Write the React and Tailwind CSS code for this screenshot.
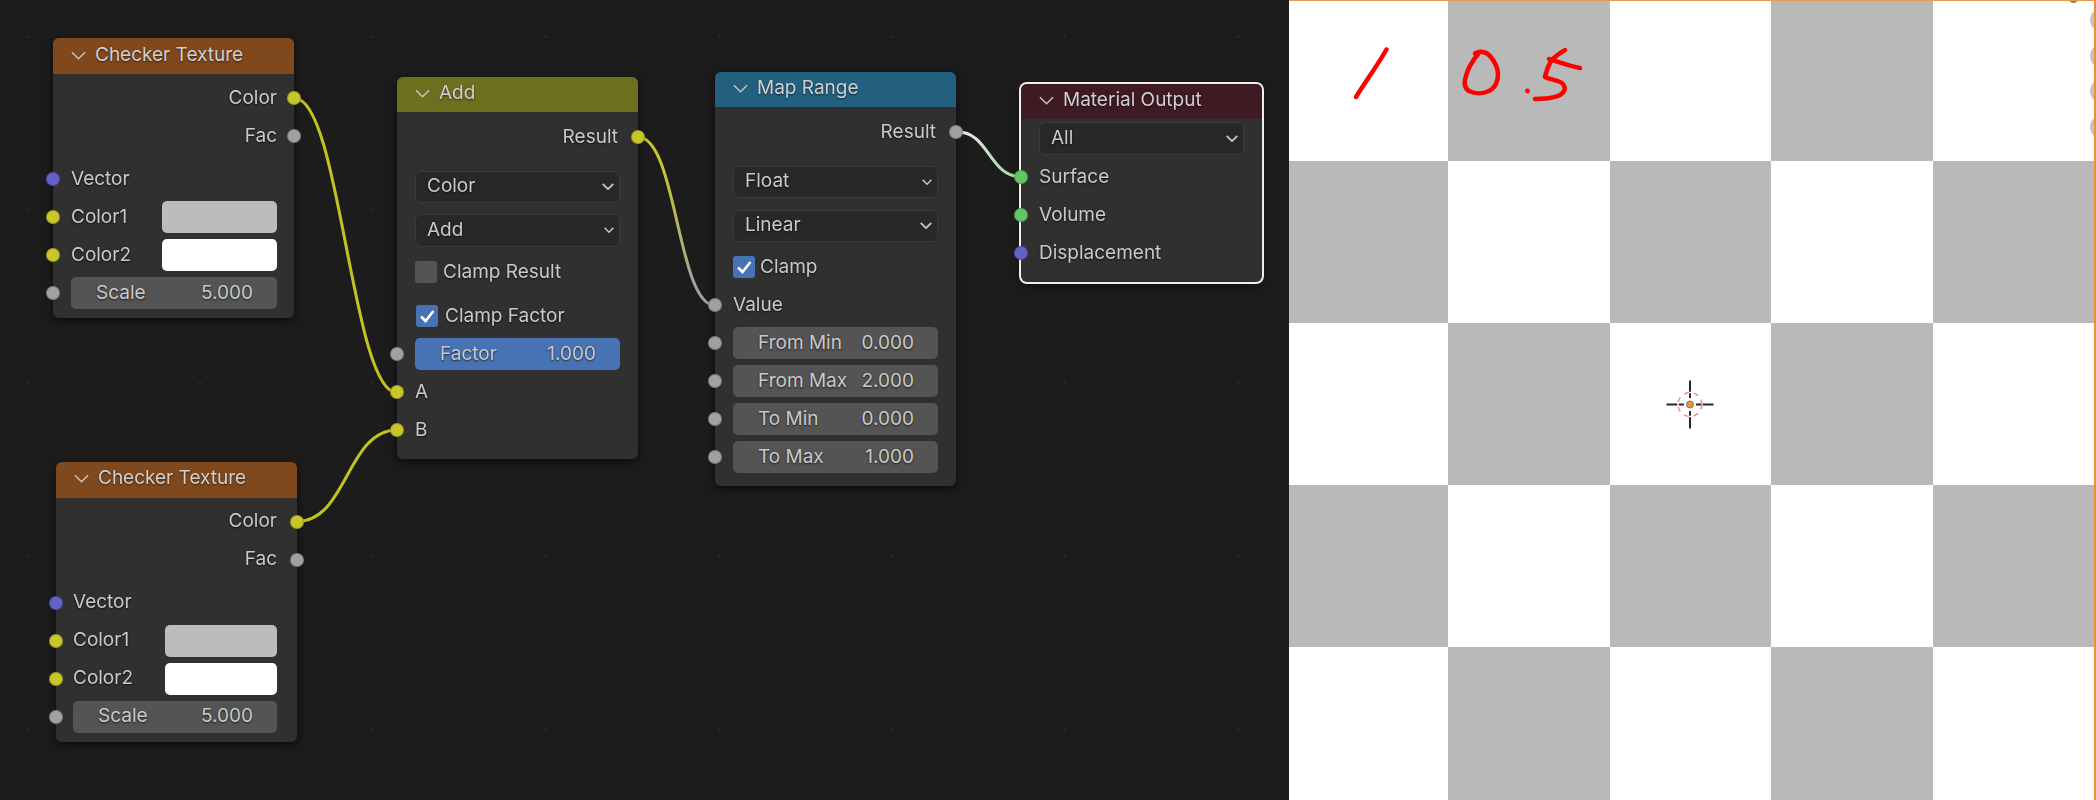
const FONT = 'font-["Inter",sans-serif]'

const SOCKET = {
  yellow: 'bg-[#c7c729]',
  gray: 'bg-[#a1a1a1]',
  purple: 'bg-[#6363c7]',
  green: 'bg-[#63c763]',
}

function Socket({ color, side = 'left' }) {
  return (
    <span
      className={`absolute top-1/2 h-[14px] w-[14px] -translate-y-1/2 rounded-full border border-black/20 ${SOCKET[color]} ${
        side === 'left' ? 'left-[-7px]' : 'right-[-7px]'
      }`}
    />
  )
}

function Chevron({ className, width = 1.6 }) {
  return (
    <svg viewBox="0 0 16 9" fill="none" className={className}>
      <path d="M1 1l7 7 7-7" stroke="currentColor" strokeWidth={width} />
    </svg>
  )
}

function Header({ title, color, height = 'h-[35px]' }) {
  return (
    <div className={`flex items-center gap-[9px] rounded-t-[6px] pb-[2px] pl-[18px] text-[#cfcfcf] ${height} ${color}`}>
      <Chevron className="h-[9px] w-[15px] text-[#c4c4c4]" />
      <span className="[text-shadow:0_1px_2px_#0009]">{title}</span>
    </div>
  )
}

function Row({ socket, side = 'left', children, className = '' }) {
  return (
    <div className={`relative flex h-[38px] items-center px-[18px] ${side === 'right' ? 'justify-end' : ''} ${className}`}>
      {socket && <Socket color={socket} side={side} />}
      {children}
    </div>
  )
}

function Label({ children }) {
  return <span className="[text-shadow:0_1px_2px_#000a]">{children}</span>
}

function Num({ label, value, active }) {
  return (
    <div
      className={`flex h-[32px] w-full items-center justify-between rounded-[5px] pl-[25px] pr-[24px] text-[#c9c9c9] ${
        active ? 'bg-[#4772b3]' : 'bg-[#545454]'
      }`}
    >
      <Label>{label}</Label>
      <Label>{value}</Label>
    </div>
  )
}

function Select({ value, className = '', small }) {
  return (
    <div
      className={`mx-[18px] flex items-center justify-between rounded-[6px] border border-[#3b3b3b] bg-[#282828] pb-[1px] pl-[11px] pr-[5px] text-[#c9c9c9] ${className}`}
    >
      <Label>{value}</Label>
      <Chevron className={small ? 'h-[6px] w-[10px]' : 'h-[7px] w-[12px]'} width={2.4} />
    </div>
  )
}

function Check({ label, checked, className = '', gap = 'mr-[6px]' }) {
  return (
    <Row className={className}>
      <span
        className={`flex h-[22px] w-[22px] items-center justify-center rounded-[3px] ${gap} ${
          checked ? 'bg-[#4772b3]' : 'bg-[#545454]'
        }`}
      >
        {checked && (
          <svg viewBox="0 0 22 22" fill="none" className="h-[22px] w-[22px]">
            <path d="M5 11.5l4.5 4.5L17.5 6" stroke="#fff" strokeWidth="2.6" />
          </svg>
        )}
      </span>
      <Label>{label}</Label>
    </Row>
  )
}

function Checker({ className, swatch, pad = 'pl-[18px] pr-[17px]' }) {
  return (
    <div className={`absolute rounded-[6px] bg-[#303030] text-[#c9c9c9] shadow-[0_3px_10px_#0009] ${className}`}>
      <Header title="Checker Texture" color="bg-[#80491d]" height="h-[36px]" />
      <div className="pb-[6px] pt-[5px]">
        <Row socket="yellow" side="right" className={pad}><Label>Color</Label></Row>
        <Row socket="gray" side="right" className={pad}><Label>Fac</Label></Row>
        <Row socket="purple" className={`mt-[5px] ${pad}`}><Label>Vector</Label></Row>
        <Row socket="yellow" className={`justify-between ${pad}`}>
          <Label>Color1</Label>
          <span className={`h-[32px] rounded-[5px] bg-[#bcbcbc] ${swatch}`} />
        </Row>
        <Row socket="yellow" className={`justify-between ${pad}`}>
          <Label>Color2</Label>
          <span className={`h-[32px] rounded-[5px] bg-white ${swatch}`} />
        </Row>
        <Row socket="gray" className={pad}><Num label="Scale" value="5.000" /></Row>
      </div>
    </div>
  )
}

function AddNode() {
  return (
    <div className="absolute left-[397px] top-[77px] w-[241px] rounded-[6px] bg-[#303030] text-[#c9c9c9] shadow-[0_3px_10px_#0009]">
      <Header title="Add" color="bg-[#6e6e1f]" />
      <div className="pb-[10px] pt-[6px]">
        <Row socket="yellow" side="right" className="pr-[20px]"><Label>Result</Label></Row>
        <Select value="Color" className="mt-[15px] h-[32px]" />
        <Select value="Add" small className="mt-[11px] h-[33px]" />
        <Check label="Clamp Result" className="mt-[6px]" />
        <Check label="Clamp Factor" checked gap="mr-[7px]" className="mt-[6px] pl-[19px]" />
        <Row socket="gray"><Num label="Factor" value="1.000" active /></Row>
        <Row socket="yellow"><Label>A</Label></Row>
        <Row socket="yellow"><Label>B</Label></Row>
      </div>
    </div>
  )
}

function MapRange() {
  return (
    <div className="absolute left-[715px] top-[72px] w-[241px] rounded-[6px] bg-[#303030] text-[#c9c9c9] shadow-[0_3px_10px_#0009]">
      <Header title="Map Range" color="bg-[#23607f]" />
      <div className="pb-[10px] pt-[6px]">
        <Row socket="gray" side="right" className="pr-[20px]"><Label>Result</Label></Row>
        <Select value="Float" small className="mt-[15px] h-[32px]" />
        <Select value="Linear" className="mt-[12px] h-[32px]" />
        <Check label="Clamp" checked gap="mr-[5px]" className="mt-[6px]" />
        <Row socket="gray"><Label>Value</Label></Row>
        <Row socket="gray"><Num label="From Min" value="0.000" /></Row>
        <Row socket="gray"><Num label="From Max" value="2.000" /></Row>
        <Row socket="gray"><Num label="To Min" value="0.000" /></Row>
        <Row socket="gray"><Num label="To Max" value="1.000" /></Row>
      </div>
    </div>
  )
}

function MaterialOutput() {
  return (
    <div className="absolute left-[1021px] top-[84px] w-[241px] rounded-[6px] bg-[#303030] text-[#c9c9c9] shadow-[0_3px_10px_#0009] ring-2 ring-[#eeeeee]">
      <Header title="Material Output" color="bg-[#3e1a23]" />
      <div className="pb-[10px] pt-[3px]">
        <Select value="All" className="h-[33px]" />
        <Row socket="green" className="mt-[3px]"><Label>Surface</Label></Row>
        <Row socket="green"><Label>Volume</Label></Row>
        <Row socket="purple"><Label>Displacement</Label></Row>
      </div>
    </div>
  )
}

function Wires() {
  return (
    <svg className="absolute inset-0 h-full w-full" fill="none" strokeWidth="3">
      <defs>
        <linearGradient id="w3" gradientUnits="userSpaceOnUse" x1="638" y1="137" x2="715" y2="306">
          <stop offset="0.2" stopColor="#c7c729" />
          <stop offset="0.85" stopColor="#a1a1a1" />
        </linearGradient>
        <linearGradient id="w4" gradientUnits="userSpaceOnUse" x1="957" y1="132" x2="1021" y2="177">
          <stop offset="0.1" stopColor="#e4e4e4" />
          <stop offset="0.95" stopColor="#9fdc9f" />
        </linearGradient>
      </defs>
      <path d="M295 98.5C340 98.5 352 392.7 397 392.7" stroke="#c2c221" />
      <path d="M297 521.5C347 521.5 347 430 397 430" stroke="#c2c221" />
      <path d="M638 137C677 137 677 305.7 715.5 305.7" stroke="url(#w3)" />
      <path d="M957 131.7C989 131.7 989 176.7 1021 176.7" stroke="url(#w4)" />
    </svg>
  )
}

const COLS = [0, 1, 2, 3, 4]
const ROWS = [0, 1, 2, 3, 4]

function Viewport() {
  return (
    <div className="relative h-full flex-1 overflow-hidden">
      <div className="grid h-full grid-cols-[159px_162px_161px_162px_163px] grid-rows-[161px_162px_162px_162px_153px]">
        {ROWS.map((r) =>
          COLS.map((c) => (
            <div key={`${r}-${c}`} className={(r + c) % 2 ? 'bg-[#b9b9b9]' : 'bg-white'} />
          )),
        )}
      </div>

      {/* red pen notes, 3D cursor */}
      <svg className="absolute inset-0 h-full w-full" fill="none">
        <g stroke="#ff0000" strokeWidth="4.5" strokeLinecap="round" strokeLinejoin="round">
          <path d="M97.5 49.5C88 66 77 81 67 97" />
          <path d="M186 53.5C190 51 197 51 201 56C206 62 209 68 209 74C209 82 206 88 200 91C194 94 186 94 180 91C175 88 175 82 177 76C179 68 184 60 190 53" />
          <path d="M276 50C270 54 265 57 262 61C259 66 257 72 256 77C262 80 270 80 274 84C277 88 276 92 271 95C265 98 255 99 246 99" />
          <path d="M260 59C270 62 281 66 291 68" />
        </g>
        <circle cx="238.5" cy="91" r="2.4" fill="#ff0000" />
        <g stroke="#262626" strokeWidth="2">
          <path d="M377.5 404.5H395M407 404.5H424.5M401 380.5V398M401 411V428.5" />
        </g>
        <circle cx="401" cy="404.5" r="12" stroke="#ffffff" strokeWidth="1.5" />
        <circle cx="401" cy="404.5" r="12" stroke="#f58a8a" strokeWidth="1.5" strokeDasharray="5 5" />
        <circle cx="401" cy="404.5" r="3.5" fill="#f0962a" stroke="#777" />
      </svg>

      {/* gizmo buttons at the panel edge */}
      <div className="absolute right-[-18px] top-[8px] flex flex-col gap-[11.5px]">
        {[0, 1, 2, 3].map((i) => (
          <span key={i} className="h-[24px] w-[24px] rounded-full bg-[#c4c4c4]" />
        ))}
      </div>
      <span className="absolute left-[780px] top-[-6px] h-[9px] w-[9px] rounded-full bg-[#5aa02c]" />
      <div className="absolute inset-x-0 top-0 h-px bg-[#e89a4e]" />
      <div className="absolute inset-y-0 right-0 w-[2px] bg-[#e8913c]" />
    </div>
  )
}

export default function App() {
  return (
    <div className={`flex h-[800px] w-[2096px] overflow-hidden bg-[#1c1c1c] text-[19px] ${FONT}`}>
      <div className="relative h-full w-[1289px] bg-[radial-gradient(circle,#2c2c2c_1px,transparent_1.5px)] bg-[size:173px_173px] bg-[position:-59.5px_-49.5px] blur-[0.7px]">
        <Wires />
        <Checker className="left-[53px] top-[38px] w-[241px]" swatch="w-[115px]" />
        <Checker className="left-[56px] top-[461.5px] w-[241px]" swatch="w-[112px]" pad="pl-[17px] pr-[20px]" />
        <AddNode />
        <MapRange />
        <MaterialOutput />
      </div>
      <Viewport />
    </div>
  )
}
